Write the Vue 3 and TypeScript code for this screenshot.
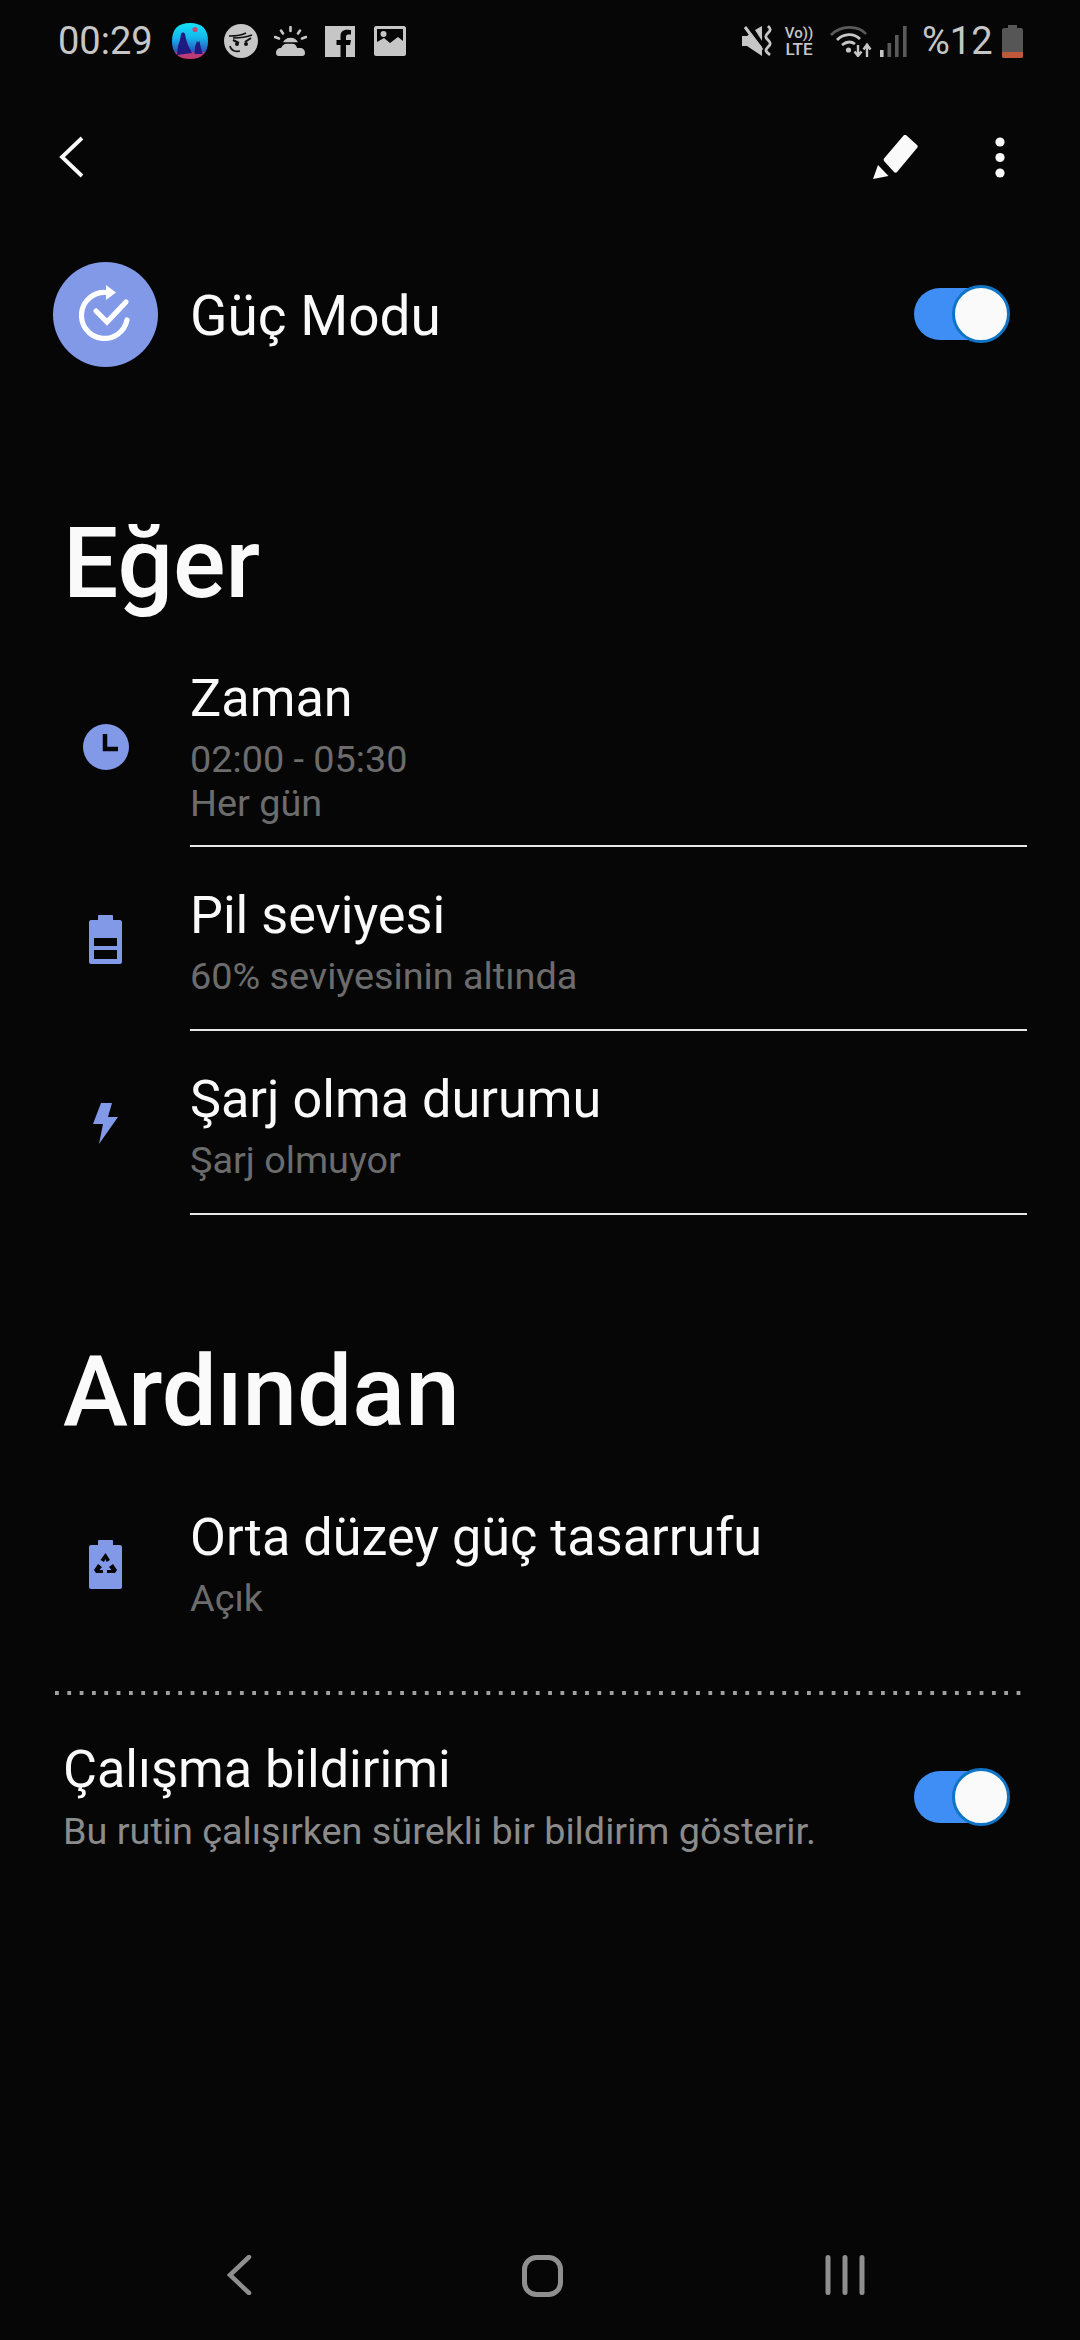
<script setup lang="ts">
interface Condition { title: string; subs: string[]; icon: string }
const conditions: Condition[] = [
  { title: 'Zaman', subs: ['02:00 - 05:30', 'Her gün'], icon: 'clock' },
  { title: 'Pil seviyesi', subs: ['60% seviyesinin altında'], icon: 'battery' },
  { title: 'Şarj olma durumu', subs: ['Şarj olmuyor'], icon: 'bolt' },
]
</script>

<template>
  <div class="screen">
    <div class="status">
      <span class="time">00:29</span>
      <svg class="st-ic s-wall" viewBox="0 0 36 36">
        <defs>
          <linearGradient id="wallGrad" x1="0" y1="0" x2="0" y2="1">
            <stop offset="0" stop-color="#12e4f8" />
            <stop offset="0.4" stop-color="#14b8ec" />
            <stop offset="0.78" stop-color="#2a58c0" />
            <stop offset="0.84" stop-color="#b83a78" />
            <stop offset="1" stop-color="#c23a70" />
          </linearGradient>
        </defs>
        <path d="M18 0C30 0 36 6 36 18S30 36 18 36 0 30 0 18 6 0 18 0Z" fill="url(#wallGrad)" />
        <circle cx="23" cy="6.5" r="2.6" fill="#c8467e" />
        <path d="M9 11c1-2 3-2 4 0l1 5 2 6 4 8-15 2 1-9 2-6Z" fill="#1e1a80" />
        <path d="M25 18l1 1.500 1.500-1.500.5 3 2.500 10h-8l.5-7Z" fill="#1e1a80" />
      </svg>
      <svg class="st-ic s-face" viewBox="0 0 34 34">
        <circle cx="17" cy="17" r="17" fill="#c6c6c6" />
        <path d="M5 12c6 0 12 0 17-3M9 14c5 0 14-1 19-3" fill="none" stroke="#111" stroke-width="1.6" />
        <path d="M9 16l6 3M27 14l-6 4" stroke="#111" stroke-width="2" fill="none" />
        <circle cx="13" cy="20" r="2" fill="#111" />
        <circle cx="22" cy="20" r="2" fill="#111" />
        <path d="M6 22c1 5 6 6 10 5" stroke="#111" stroke-width="1.6" fill="none" />
      </svg>
      <svg class="st-ic s-weather" viewBox="0 0 33 30">
        <path d="M2 27c0-3 2-5 5-5 2-4 6-6 10-5 3 0 6 3 6 5h3c3 0 5 2 5 5 0 2-1 3-3 3H5c-2 0-3-1-3-3Z" fill="#c6c6c6" />
        <path d="M8 17a9 9 0 0 1 17 0Z" fill="#c6c6c6" stroke="#060607" stroke-width="1.5" />
        <path d="M16.500 1v4M7 4.500l2 3M26 4.500l-2 3M1 11l4 1.500M32 11l-4 1.500" stroke="#c6c6c6" stroke-width="2.600" stroke-linecap="round" />
      </svg>
      <svg class="st-ic s-fb" viewBox="0 0 30 31">
        <path d="M0 0H30V31H21V19H25L26 14H21V11C21 9 22 8.500 24 8.500H26V4C25 4 23 3.800 22 3.800 18 3.800 15.500 6 15.500 10V14H11.500V19H15.500V31H0Z" fill="#c6c6c6" />
      </svg>
      <svg class="st-ic s-gal" viewBox="0 0 32 30">
        <path fill-rule="evenodd" d="M2 0H30C31 0 32 1 32 2V28C32 29 31 30 30 30H2C1 30 0 29 0 28V2C0 1 1 0 2 0ZM3 3V16L10 12 16 17 24 11 29 15V3Z" fill="#c6c6c6" />
        <circle cx="9.500" cy="8" r="3" fill="#c6c6c6" />
      </svg>
      <span class="st-space"></span>
      <svg class="st-ic s-mute" viewBox="0 0 31 32">
        <path d="M0 11H5L9 8 20 22V31L5 21H0Z" fill="#c6c6c6" />
        <path d="M13 5L20 1V16Z" fill="#c6c6c6" />
        <path d="M3 2L20 25" stroke="#c6c6c6" stroke-width="3" />
        <path d="M26 1c3 3 3 4 0 7s-3 4 0 7 3 4 0 7-3 4 2 8" fill="none" stroke="#c6c6c6" stroke-width="2.800" />
      </svg>
      <div class="volte">
        <span class="vo">Vo))</span>
        <span class="lte">LTE</span>
      </div>
      <svg class="st-ic s-wifi" viewBox="0 0 42 32">
        <path d="M1 10C11 0 28 0 36 9" fill="none" stroke="#5a5a5a" stroke-width="2.600" />
        <path d="M7 15C14 8 24 8 30 14M12 20C17 16 21 16 25 19" fill="none" stroke="#c6c6c6" stroke-width="2.800" />
        <circle cx="18.500" cy="25" r="2.600" fill="#c6c6c6" />
        <path d="M28 20V30M24.500 26.500L28 31 31.500 26.500" fill="none" stroke="#c6c6c6" stroke-width="2.400" />
        <path d="M37 32V21M33.500 24.500L37 19.500 40.500 24.500" fill="none" stroke="#c6c6c6" stroke-width="2.400" />
      </svg>
      <svg class="st-ic s-sig" viewBox="0 0 27 31">
        <rect x="0" y="24" width="3.600" height="7" fill="#c6c6c6" />
        <rect x="7.500" y="17" width="3.600" height="14" fill="#5a5a5a" />
        <rect x="15" y="9" width="3.600" height="22" fill="#5a5a5a" />
        <rect x="23" y="0" width="3.600" height="31" fill="#5a5a5a" />
      </svg>
      <span class="pct">%12</span>
      <svg class="st-ic s-bat" viewBox="0 0 21 33">
        <path d="M6 0H15V3H19C20 3 21 4 21 5V31C21 32 20 33 19 33H2C1 33 0 32 0 31V5C0 4 1 3 2 3H6Z" fill="#565656" />
        <path d="M0 27H21V31C21 32 20 33 19 33H2C1 33 0 32 0 31Z" fill="#c2583a" />
      </svg>
    </div>

    <div class="appbar">
      <svg class="ab-back" viewBox="0 0 26 42">
        <path d="M24 2L4 21 24 40" fill="none" stroke="#fafafa" stroke-width="3.800" />
      </svg>
      <span class="ab-space"></span>
      <svg class="ab-pen" viewBox="0 0 46 44">
        <path d="M33 0L44 10C45 11 45 12 44 13L24 37C23.500 38 22 38 21 37L11 26C10.500 25 10.500 24 11 23.500L31 0C32-.5 32.500-.5 33 0Z" fill="#fafafa" />
        <path d="M5 30L15.500 41 0 44Z" fill="#fafafa" />
      </svg>
      <svg class="ab-dots" viewBox="0 0 10 41">
        <circle cx="5" cy="5" r="4.600" fill="#fafafa" />
        <circle cx="5" cy="20.500" r="4.600" fill="#fafafa" />
        <circle cx="5" cy="36" r="4.600" fill="#fafafa" />
      </svg>
    </div>

    <div class="power">
      <div class="power-circle">
        <svg class="power-ic" viewBox="53 262 105 105">
          <path d="M106 292.500A23 23 0 1 0 127 320" fill="none" stroke="#fff" stroke-width="5.200" stroke-linecap="round" />
          <path d="M106 285L116 292.500 106 300Z" fill="#fff" />
          <path d="M96 311L107 322 126 302" fill="none" stroke="#fff" stroke-width="5.200" stroke-linecap="round" />
        </svg>
      </div>
      <span class="power-title">Güç Modu</span>
      <span class="toggle"><span class="knob"></span></span>
    </div>

    <h2 class="heading h-if">Eğer</h2>

    <div
      v-for="(c, i) in conditions"
      :key="c.title"
      class="row"
      :class="'row-' + i"
    >
      <div class="row-icon">
        <svg v-if="c.icon === 'clock'" class="ic-clock" viewBox="0 0 46 46">
          <circle cx="23" cy="23" r="23" fill="#8299e8" />
          <path d="M22 10V25H35" fill="none" stroke="#060607" stroke-width="4.500" />
        </svg>
        <svg v-else-if="c.icon === 'battery'" class="ic-bat" viewBox="0 0 33 49">
          <path d="M9 1C9 .5 9.500 0 10 0H23C23.500 0 24 .5 24 1V5H31C32 5 33 6 33 7V47C33 48 32 49 31 49H2C1 49 0 48 0 47V7C0 6 1 5 2 5H9Z" fill="#8299e8" />
          <rect x="5" y="23" width="23" height="8" fill="#060607" />
          <rect x="5" y="35" width="23" height="9" fill="#060607" />
        </svg>
        <svg v-else class="ic-bolt" viewBox="0 0 25 41">
          <path d="M8 0H19L15 14H25L6 41 10 21H0Z" fill="#8299e8" />
        </svg>
      </div>
      <div class="row-body">
        <div class="title">{{ c.title }}</div>
        <div v-for="s in c.subs" :key="s" class="sub">{{ s }}</div>
      </div>
    </div>

    <h2 class="heading h-then">Ardından</h2>

    <div class="row row-action">
      <div class="row-icon">
        <svg class="ic-bat" viewBox="0 0 33 49">
          <path d="M9 1C9 .5 9.500 0 10 0H23C23.500 0 24 .5 24 1V5H31C32 5 33 6 33 7V47C33 48 32 49 31 49H2C1 49 0 48 0 47V7C0 6 1 5 2 5H9Z" fill="#8299e8" />
          <path d="M16.500 13L21 20 17.500 22 16.500 19 15 22 11.500 20Z" fill="#060607" />
          <path d="M9 24L13 27 10.500 30H14V33H7L5 30Z" fill="#060607" />
          <path d="M24 24L20 27 22.500 30H18V33H26L28 30Z" fill="#060607" />
        </svg>
      </div>
      <div class="row-body plain">
        <div class="title">Orta düzey güç tasarrufu</div>
        <div class="sub">Açık</div>
      </div>
    </div>

    <div class="dotted"></div>

    <div class="notify">
      <div class="notify-text">
        <div class="title">Çalışma bildirimi</div>
        <div class="sub light">Bu rutin çalışırken sürekli bir bildirim gösterir.</div>
      </div>
      <span class="toggle"><span class="knob"></span></span>
    </div>

    <div class="nav">
      <svg class="nav-back" viewBox="0 0 25 40">
        <path d="M22 2L3 20 22 38" fill="none" stroke="#8f8f8f" stroke-width="4.500" stroke-linecap="round" />
      </svg>
      <svg class="nav-home" viewBox="0 0 41 42">
        <rect x="2.500" y="2.500" width="36" height="37" rx="12" fill="none" stroke="#8f8f8f" stroke-width="5" />
      </svg>
      <svg class="nav-recent" viewBox="0 0 40 40">
        <path d="M3 2.500V37.500M20 2.500V37.500M37 2.500V37.500" fill="none" stroke="#8f8f8f" stroke-width="5" stroke-linecap="round" />
      </svg>
    </div>
  </div>
</template>

<style scoped>
.screen {
  width: 1080px;
  height: 2340px;
  background: #060607;
  font-family: Roboto, "Noto Sans", sans-serif;
  color: #fafafa;
  display: flex;
  flex-direction: column;
  overflow: hidden;
}
.status {
  height: 82px;
  display: flex;
  align-items: center;
  padding: 0 57px 0 58px;
  box-sizing: border-box;
  color: #c6c6c6;
}
.time { font-size: 38px; width: 114px; letter-spacing: 0; }
.st-ic { display: block; flex: none; }
.s-wall { width: 36px; height: 36px; }
.s-face { width: 34px; height: 34px; margin-left: 16px; }
.s-weather { width: 33px; height: 30px; margin-left: 16px; }
.s-fb { width: 30px; height: 31px; margin-left: 18px; }
.s-gal { width: 32px; height: 30px; margin-left: 19px; }
.st-space { flex: 1; }
.s-mute { width: 31px; height: 32px; }
.volte {
  width: 32px;
  margin-left: 10px;
  display: flex;
  flex-direction: column;
  align-items: center;
  font-weight: 500;
  line-height: 16px;
}
.vo { font-size: 15px; }
.lte { font-size: 17px; }
.s-wifi { width: 42px; height: 32px; margin-left: 15px; }
.s-sig { width: 27px; height: 31px; margin-left: 8px; }
.pct { font-size: 38px; width: 72px; margin-left: 15px; text-align: left; }
.s-bat { width: 21px; height: 33px; margin-left: 8px; }

.appbar {
  height: 150px;
  display: flex;
  align-items: center;
  padding: 0 75px 0 58px;
  box-sizing: border-box;
}
.ab-back { width: 26px; height: 42px; display: block; }
.ab-space { flex: 1; }
.ab-pen { width: 46px; height: 44px; display: block; }
.ab-dots { width: 10px; height: 41px; display: block; margin-left: 76px; }

.power {
  height: 164px;
  display: flex;
  align-items: center;
  padding: 0 74px 0 53px;
  box-sizing: border-box;
}
.power-circle {
  width: 105px;
  height: 105px;
  border-radius: 50%;
  background: #8299e8;
  flex: none;
}
.power-ic { width: 105px; height: 105px; display: block; }
.power-title { font-size: 55px; margin-left: 32px; flex: 1; padding-top: 3px; }
.toggle {
  width: 92px;
  height: 52px;
  border-radius: 26px;
  background: #3f8ef5;
  display: flex;
  align-items: center;
  justify-content: flex-end;
  flex: none;
}
.knob {
  width: 58px;
  height: 58px;
  box-sizing: border-box;
  border-radius: 50%;
  border: 3px solid #0f74c4;
  background: #fafafa;
  margin-right: -4px;
  flex: none;
}

.heading {
  margin: 0;
  font-size: 98px;
  font-weight: 500;
  line-height: 120px;
  height: 120px;
  padding-left: 63px;
}
.h-if { margin-top: 108px; }
.h-then { margin-top: 117px; }

.row {
  display: flex;
  align-items: center;
  padding-left: 53px;
}
.row-icon {
  width: 105px;
  flex: none;
  display: flex;
  justify-content: center;
}
.row-body {
  margin-left: 32px;
  margin-right: 53px;
  flex: 1;
  border-bottom: 2px solid #e8e8e8;
  box-sizing: border-box;
}
.row-body.plain { border-bottom: none; }
.row-0 { margin-top: 22px; }
.row-0 .row-body { padding-top: 23px; padding-bottom: 20px; }
.row-1 .row-body, .row-2 .row-body { padding-top: 39px; padding-bottom: 31px; }
.row-action { margin-top: 56px; }
.row-action .row-body { padding-top: 0; }

.title { font-size: 52.2px; line-height: 60px; color: #fafafa; }
.sub { font-size: 37.8px; line-height: 44px; color: #6c6c6c; }
.title + .sub { margin-top: 8px; }
.sub.light { color: #8b8b8b; margin-top: 9px; }

.ic-clock { width: 46px; height: 46px; display: block; }
.ic-bat { width: 33px; height: 49px; display: block; }
.ic-bolt { width: 25px; height: 41px; display: block; }

.dotted {
  height: 4px;
  margin: 71px 53px 0 55px;
  background-image: linear-gradient(to right, #a0a0a0 4px, transparent 4px);
  background-size: 12.33px 4px;
  background-repeat: repeat-x;
}

.notify {
  display: flex;
  align-items: center;
  padding: 45px 74px 0 63px;
}
.notify-text { flex: 1; }

.nav {
  margin-top: auto;
  height: 85px;
  display: flex;
  align-items: flex-start;
  padding-left: 227px;
  box-sizing: border-box;
}
.nav-back { width: 25px; height: 40px; display: block; }
.nav-home { width: 41px; height: 42px; display: block; margin-left: 270px; }
.nav-recent { width: 40px; height: 40px; display: block; margin-left: 262px; }
</style>

<style>
html, body { background: #060607; }
</style>
